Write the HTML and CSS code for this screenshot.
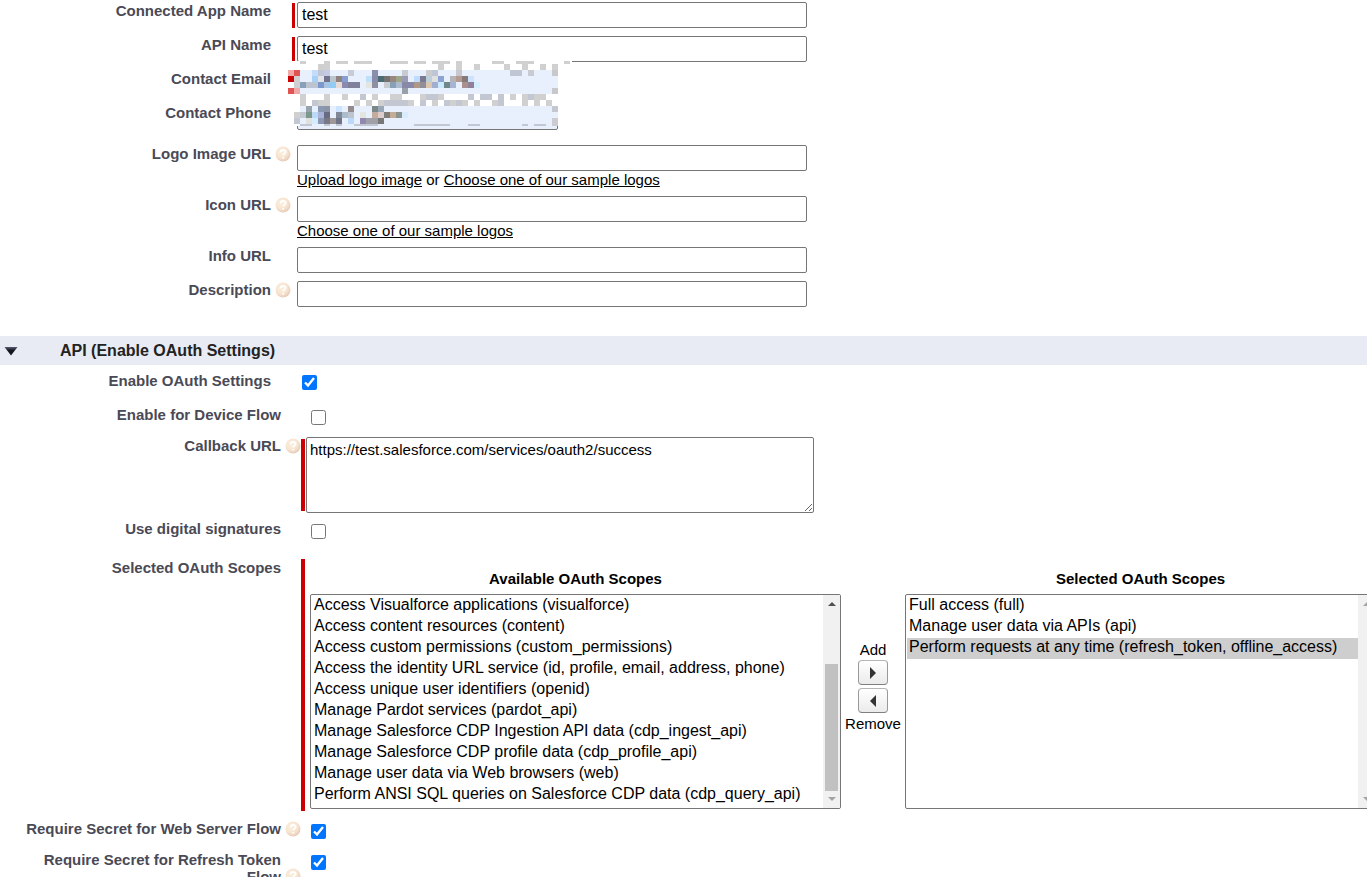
FILE: index.html
```html
<!DOCTYPE html>
<html lang="en">
<head>
<meta charset="utf-8">
<title>Connected App</title>
<link rel="stylesheet" href="styles.css">
</head>
<body>
<svg class="defs" aria-hidden="true">
  <defs>
    <radialGradient id="orb" cx="0.4" cy="0.35" r="0.7">
      <stop offset="0" stop-color="#fbf0de"/>
      <stop offset="0.6" stop-color="#f6e4d0"/>
      <stop offset="1" stop-color="#e6c6b2"/>
    </radialGradient>
    <linearGradient id="arrow" x1="0" y1="0" x2="0" y2="1">
      <stop offset="0" stop-color="#5a5d78"/>
      <stop offset="0.4" stop-color="#15161f"/>
      <stop offset="1" stop-color="#15161f"/>
    </linearGradient>
    <symbol id="help" viewBox="0 0 16 16">
      <circle cx="8" cy="8" r="7.5" fill="url(#orb)"/>
      <path d="M5.6 6.2C5.7 4.6 6.700 4 8.100 4c1.500 0 2.500.8 2.500 2 0 1.700-2.400 1.700-2.400 3.500M8.200 11v1.600" fill="none" stroke="#fff" stroke-width="1.800"/>
    </symbol>
  </defs>
</svg>
<main>
  <section class="basic">
    <div class="row">
      <label for="app">Connected App Name</label><span></span><i class="req"></i>
      <div><input id="app" class="text" type="text" value="test"></div>
    </div>
    <div class="row">
      <label for="api">API Name</label><span></span><i class="req"></i>
      <div><input id="api" class="text" type="text" value="test"></div>
    </div>
    <div class="private">
      <div class="row">
        <label for="email">Contact Email</label><span></span><i></i>
        <div><input id="email" class="text filled" type="text"></div>
      </div>
      <div class="row last">
        <label for="phone">Contact Phone</label><span></span><i></i>
        <div><input id="phone" class="text filled" type="text"></div>
      </div>
      <svg class="mosaic" id="mosaic" viewBox="0 0 284 65" aria-hidden="true"></svg>
    </div>
    <div class="row">
      <label for="logo">Logo Image URL</label><svg class="help"><use href="#help"/></svg><i></i>
      <div><input id="logo" class="text" type="text">
        <p><a href="#">Upload logo image</a> or <a href="#">Choose one of our sample logos</a></p></div>
    </div>
    <div class="row">
      <label for="icon">Icon URL</label><svg class="help"><use href="#help"/></svg><i></i>
      <div><input id="icon" class="text" type="text">
        <p><a href="#">Choose one of our sample logos</a></p></div>
    </div>
    <div class="row">
      <label for="info">Info URL</label><span></span><i></i>
      <div><input id="info" class="text" type="text"></div>
    </div>
    <div class="row">
      <label for="desc">Description</label><svg class="help"><use href="#help"/></svg><i></i>
      <div><input id="desc" class="text" type="text"></div>
    </div>
  </section>

  <header class="bar">
    <svg class="twist" viewBox="0 0 14 10"><path d="M0.500 1h13L7 9.500z" fill="url(#arrow)"/></svg>
    <h2>API (Enable OAuth Settings)</h2>
  </header>

  <section class="oauth">
    <div class="row outer">
      <label for="enable">Enable OAuth Settings</label><span></span><i></i>
      <div><input id="enable" type="checkbox" checked></div>
    </div>
    <div class="row">
      <label for="device">Enable for Device Flow</label><span></span><i></i>
      <div><input id="device" type="checkbox"></div>
    </div>
    <div class="row callback">
      <label for="callback">Callback URL</label><svg class="help"><use href="#help"/></svg><i class="req"></i>
      <div><textarea id="callback">https://test.salesforce.com/services/oauth2/success</textarea></div>
    </div>
    <div class="row signatures">
      <label for="digital">Use digital signatures</label><span></span><i></i>
      <div><input id="digital" type="checkbox"></div>
    </div>
    <div class="row scopes">
      <label for="selected">Selected OAuth Scopes</label><span></span><i class="req"></i>
      <div class="transfer">
        <div class="list available">
          <label for="available">Available OAuth Scopes</label>
          <div class="box">
            <select id="available" size="10" multiple>
              <option>Access Visualforce applications (visualforce)</option>
              <option>Access content resources (content)</option>
              <option>Access custom permissions (custom_permissions)</option>
              <option>Access the identity URL service (id, profile, email, address, phone)</option>
              <option>Access unique user identifiers (openid)</option>
              <option>Manage Pardot services (pardot_api)</option>
              <option>Manage Salesforce CDP Ingestion API data (cdp_ingest_api)</option>
              <option>Manage Salesforce CDP profile data (cdp_profile_api)</option>
              <option>Manage user data via Web browsers (web)</option>
              <option>Perform ANSI SQL queries on Salesforce CDP data (cdp_query_api)</option>
            </select>
            <div class="scroll">
              <svg viewBox="0 0 17 17"><path d="M5 11h8L9 7z" fill="#505050"/></svg>
              <div class="track"><div class="thumb"></div></div>
              <svg viewBox="0 0 17 17"><path d="M5 6h8l-4 4z" fill="#a3a3a3"/></svg>
            </div>
          </div>
        </div>
        <div class="moves">
          <span>Add</span>
          <button type="button" aria-label="Add"><svg viewBox="0 0 8 12"><path d="M1 0v12l6-6z" fill="#333"/></svg></button>
          <button type="button" aria-label="Remove"><svg viewBox="0 0 8 12"><path d="M7 0v12L1 6z" fill="#333"/></svg></button>
          <span>Remove</span>
        </div>
        <div class="list chosen">
          <label for="selected">Selected OAuth Scopes</label>
          <div class="box">
            <select id="selected" size="10" multiple>
              <option>Full access (full)</option>
              <option>Manage user data via APIs (api)</option>
              <option selected>Perform requests at any time (refresh_token, offline_access)</option>
            </select>
            <div class="scroll">
              <svg viewBox="0 0 17 17"><path d="M5 11h8L9 7z" fill="#a3a3a3"/></svg>
              <div class="track"></div>
              <svg viewBox="0 0 17 17"><path d="M5 6h8l-4 4z" fill="#a3a3a3"/></svg>
            </div>
          </div>
        </div>
      </div>
    </div>
    <div class="row">
      <label for="web">Require Secret for Web Server Flow</label><svg class="help"><use href="#help"/></svg><i></i>
      <div><input id="web" type="checkbox" checked></div>
    </div>
    <div class="row refresh">
      <label for="refresh">Require Secret for Refresh Token Flow</label><svg class="help"><use href="#help"/></svg><i></i>
      <div><input id="refresh" type="checkbox" checked></div>
    </div>
  </section>
</main>
<script src="mosaic.js"></script>
</body>
</html>
```
FILE: styles.css
```css
* { box-sizing: border-box; }
html { scrollbar-width: none; overflow-x: hidden; }
body {
  margin: 0;
  background: #fff;
  color: #000;
  font-family: "Liberation Sans", Arial, sans-serif;
  font-size: 15px;
  line-height: 17px;
}
main { overflow: hidden; }
.defs { position: absolute; width: 0; height: 0; }

.row { display: grid; align-items: start; }
.row > label {
  padding-left: 24px;
  color: #4a4a56;
  font-weight: bold;
  text-align: right;
}
.req { align-self: stretch; background: #c00; }
.help { width: 16px; height: 16px; margin: 1px 0 0 4px; }

.basic { padding-top: 2px; }
.basic .row, .oauth .outer { grid-template-columns: 271px 21px 5px 1fr; }
.basic .row { margin-bottom: 8px; }
.basic .last { margin-bottom: 15px; }
.basic .req { width: 3px; margin: 1px 0 0; }
.text {
  display: block;
  width: 510px;
  max-width: 100%;
  height: 26px;
  padding: 0 4px 1px;
  border: 1px solid #767676;
  border-radius: 2px;
  background: #fff;
  font: 16px "Liberation Sans", Arial, sans-serif;
}
.filled { width: 261px; background: #e8f0fe; }
.basic p { margin: 0; }
a { color: #000; text-decoration: underline; }

.private { position: relative; }
.mosaic {
  position: absolute;
  left: 288px;
  top: -9px;
  width: 284px;
  height: 65px;
}

.bar {
  display: flex;
  align-items: center;
  gap: 42px;
  height: 29px;
  margin-top: 29px;
  padding-left: 4px;
  background: #e8ebf3;
}
.twist { width: 14px; height: 10px; }
.bar h2 { margin: 0; color: #222; font-size: 16px; }

.oauth { padding-top: 7px; }
.oauth .row { grid-template-columns: 281px 20px 5px 1fr; min-height: 31px; }
.oauth .outer { grid-template-columns: 271px 21px 5px 1fr; min-height: 34px; }
.oauth .req { width: 4px; }
input[type="checkbox"] {
  display: block;
  width: 15px;
  height: 15px;
  margin: 4px 0 0 5px;
}
.outer input[type="checkbox"] { margin-top: 3px; }
.callback { margin-bottom: 7px; }
.callback .req { margin: 2px 0; }
textarea {
  display: block;
  width: 508px;
  max-width: 100%;
  height: 76px;
  padding: 3px;
  border: 1px solid #767676;
  border-radius: 2px;
  font: 15px/17px "Liberation Sans", Arial, sans-serif;
}
.oauth .signatures { min-height: 39px; }
.scopes { margin-bottom: 9px; }

.transfer { display: flex; padding: 11px 0 2px 4px; }
.list { display: flex; flex: none; flex-direction: column; gap: 7px; }
.list label { font-weight: bold; text-align: center; }
.available { width: 531px; }
.chosen { width: 471px; }
.box {
  display: flex;
  border: 1px solid #767676;
  border-radius: 2px;
  padding: 1px 0;
}
select {
  flex: 1;
  min-width: 0;
  height: 211px;
  padding: 0 0 0 1px;
  border: 0;
  outline: 0;
  overflow: hidden;
  background: #fff;
  font: 16px "Liberation Sans", Arial, sans-serif;
}
option { height: 21px; min-height: 21px; padding: 0 2px; line-height: 18px; color: #000; }
option:checked { background: #cecece; }
.scroll { display: flex; flex-direction: column; width: 17px; margin: -1px 0; background: #f1f1f1; }
.scroll svg { width: 17px; height: 17px; }
.track { display: flex; flex: 1; align-items: flex-end; padding: 0 2px; }
.thumb { width: 13px; height: 71%; background: #c1c1c1; }

.moves {
  display: flex;
  flex: none;
  flex-direction: column;
  align-items: center;
  gap: 3px;
  width: 64px;
  padding-top: 72px;
  line-height: 15px;
}
.moves button {
  display: flex;
  align-items: center;
  justify-content: center;
  width: 30px;
  height: 25px;
  padding: 0;
  border: 1px solid #999;
  border-color: #b5b5b5 #999 #7f7f7f;
  border-radius: 4px;
  background: linear-gradient(#fff, #ebebeb);
}
.moves svg { width: 8px; height: 12px; }

.refresh > .help { margin-top: 17px; }
```
FILE: mosaic.js
```js
// Privacy mosaic over the contact fields: [top, height, tiles], where a tile is
// "column:colour" or "first-last:colour" in 6px columns.
const G = "d0d0d0", B = "c3c7d2";
const rows = [
  [0, 3, `2:${G} 6:${G} 8-9:${G} 11-13:${G} 17-19:${G} 21-22:${G} 24-26:${G} 28:${G} 34-35:${G} 38-40:${G} 46:${G}`],
  [3, 6, `5-6:${G} 25:${G} 28:${G} 31:${G} 36:${G} 39:${G} 42:${G} 44:${G}`],
  [9, 6, `0:f0a8a8 1:e05454 4:c2dcfa 5:c0c6d6 6:c5c9e2 10:c8ccd6 14:8a8dab 19:c8ccd2 23:cccccc 24:bec6d6 28:c8c8cc 37-38:c0c6d2 40:c8ccd2 44:c8c8cc`],
  [15, 6, `0:cc0000 1:${G} 4:a8d0f4 5:e2e4e8 6:70728e 7:bcc4cc 8:908280 9:889dd2 13:bfe0fa 14:8a8bab 15:4c6a72 16:737373 17:998880 18:9ca888 19:9a9cb6 21:bfdcff 22:7a7a90 23:bcd0dc 24:e0e0e0 25:8ca4d4 27:b4b4b8 28:b49a90 29:857a78 30:cce2ff`],
  [21, 6, `1:${G} 2:88a0b8 3:bcc4d0 4:bcc4d0 5:7c98cc 6:a8c4e4 7:90ccf4 8:e8dcd8 9:8a8aae 10-11:80809a 13:e4e4e0 14:8c90a0 16:c8ccd0 17:88a0b8 18:acbccc 19-20:8888a8 21:b09888 22:908e98 23:dcc8b0 24:a0aed0 25:cceaff 26:708888 27:a8b4d4 29:a89090 30:908098 31:d4f0ff`],
  [27, 6, `0:e05454 1:f0a8a8 19:9aa0a8 44:c8c8cc`],
  [33, 6, `2:${G} 6:${G} 9:${G} 12:${B} 14:${G} 17-18:${G} 22:${G} 23-24:${B} 25:${G} 30:${B} 32-33:${B} 35:${B} 37:${G} 39:${G} 40:${B} 41-42:${G}`],
  [39, 6, `2:${G} 4:${B} 5-6:${G} 11:${G} 13:${G} 15:${G} 16-19:${B} 20:${G} 22:${B} 24:${G} 26:${B} 27:${G} 28:${B} 29:${G} 31:${G} 34:${G} 35:${B} 39:${G} 41:${G} 43:${G}`],
  [45, 6, `3:98a4ac 5:8a98b4 6:8c94a8 8:cce4ff 10:948c8c 14:7c8888 15:98a8b8 44:${B}`],
  [51, 6, `1:${G} 2:c4c8d0 3:7c988c 4:bcd8f4 5:a8b4d8 6:686c80 8:808898 9:acbccc 10:bcc4d0 12:e4e4e0 14:c4ac9c 15:dccccc 16:807c78 17:c4ac98 18:8c9490 19:d8ecff`],
  [57, 6, `1:${B} 3:e0e0dc 4:d4ecff 5:8c98b4 6:787888 7:a09898 8:707488 10:bcd8f8 12:9088b0 13-14:a0a0a8 15:787878 44:ccccd0`],
  [63, 2, `2-3:${B} 6:${B} 8:${B} 11-14:${B} 21-26:${B} 30-31:${B} 39:${B} 41-42:${B} 44:ccccd0`]
];
const svg = document.getElementById("mosaic");
function tile(x, y, w, h, fill) {
  const r = document.createElementNS("http://www.w3.org/2000/svg", "rect");
  Object.entries({ x, y, width: w, height: h, fill, "shape-rendering": "crispEdges" })
    .forEach(([k, v]) => r.setAttribute(k, v));
  svg.appendChild(r);
}
tile(0, 0, 284, 65, "#fff");
tile(12, 9, 258, 24, "#e8effd");
tile(12, 45, 258, 20, "#e8effd");
for (const [y, h, tiles] of rows) {
  for (const t of tiles.split(" ")) {
    const [span, colour] = t.split(":");
    const [a, b = a] = span.split("-").map(Number);
    tile(a * 6, y, (b - a + 1) * 6, h, "#" + colour);
  }
}
```
